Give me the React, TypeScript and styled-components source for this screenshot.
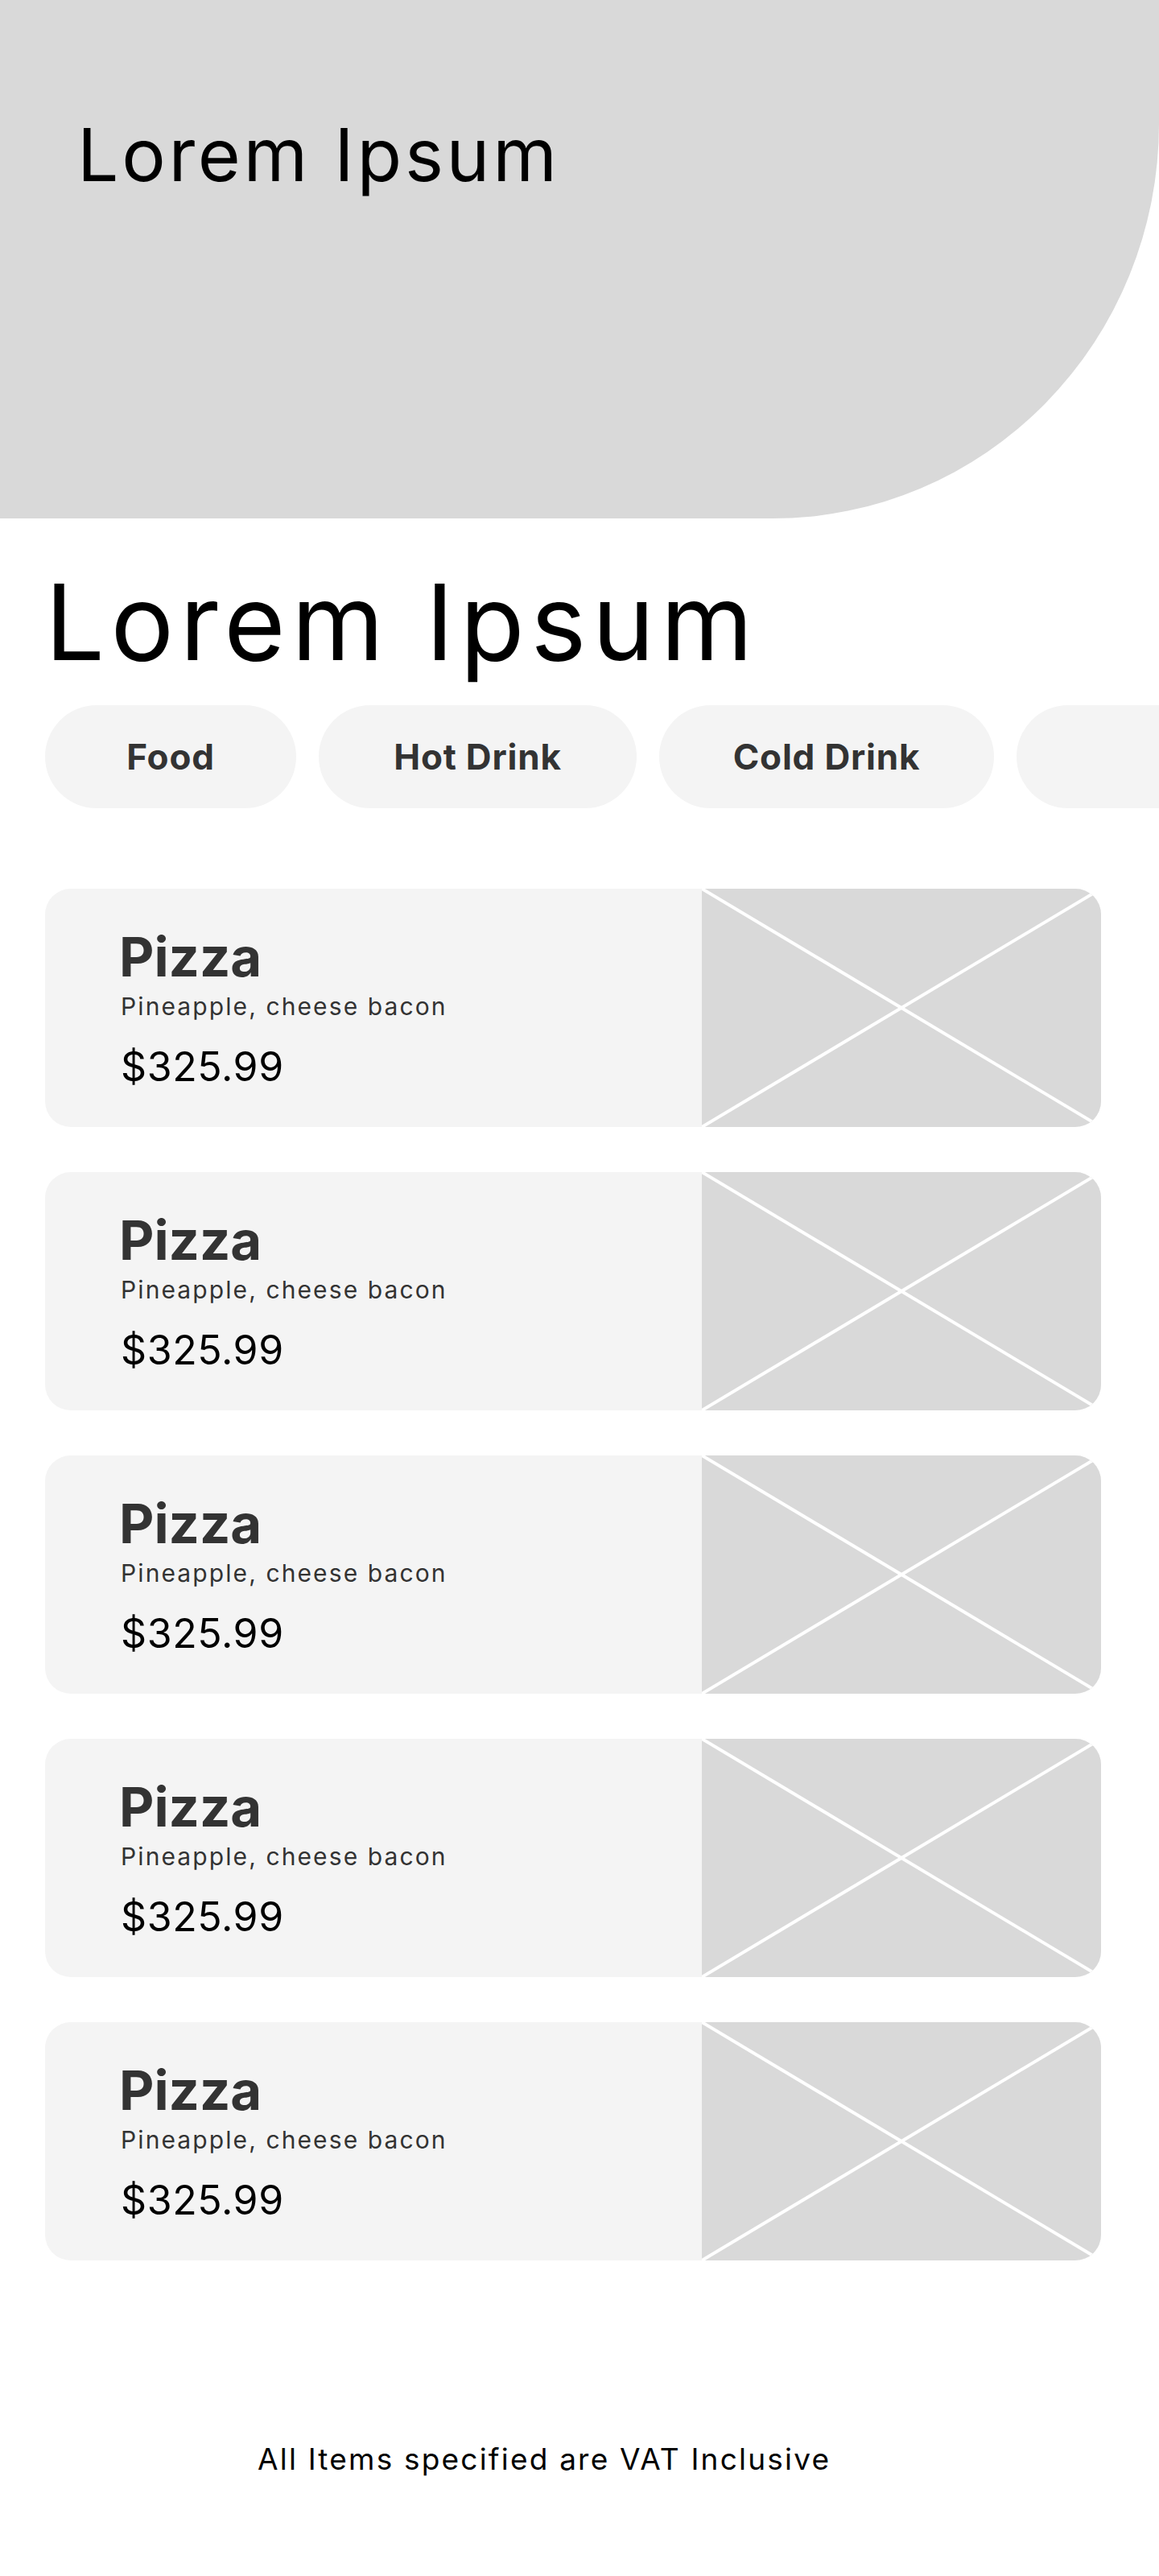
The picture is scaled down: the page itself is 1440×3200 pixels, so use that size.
import React from "react";
import styled, { createGlobalStyle } from "styled-components";

const GlobalStyle = createGlobalStyle`
  html, body {
    margin: 0;
    padding: 0;
    background: #ffffff;
  }
  body {
    font-family: Inter, "Open Sans", "Noto Sans", sans-serif;
    color: #000;
  }
  * { box-sizing: border-box; }
`;

const Page = styled.div`
  width: 1440px;
  min-height: 3200px;
  overflow: hidden;
  display: flex;
  flex-direction: column;
`;

const Hero = styled.header`
  height: 644px;
  background: #d9d9d9;
  border-bottom-right-radius: 480px 490px;
  padding: 147px 0 0 96px;
`;

const HeroTitle = styled.h1`
  margin: 0;
  font-size: 91px;
  line-height: 91px;
  font-weight: 400;
  letter-spacing: 3.7px;
  color: #000;
`;

const PageTitle = styled.h2`
  margin: 63px 0 0 56px;
  font-size: 131px;
  line-height: 131px;
  font-weight: 400;
  letter-spacing: 7.5px;
  color: #000;
`;

const ChipRow = styled.nav`
  margin-top: 38px;
  padding-left: 56px;
  display: flex;
  gap: 28px;
  overflow: hidden;
`;

const Chip = styled.button<{ $w: number }>`
  flex: 0 0 ${(p) => p.$w}px;
  height: 128px;
  border: none;
  border-radius: 64px;
  background: #f4f4f4;
  color: #333333;
  font-family: Inter, "Open Sans", sans-serif;
  font-weight: 700;
  font-size: 44px;
  letter-spacing: 0.8px;
  display: flex;
  align-items: center;
  justify-content: center;
  padding: 0;
  white-space: nowrap;
`;

const CardList = styled.section`
  margin-top: 100px;
  padding-left: 56px;
  display: flex;
  flex-direction: column;
  gap: 56px;
`;

const Card = styled.article`
  width: 1312px;
  height: 296px;
  border-radius: 32px;
  overflow: hidden;
  background: #f4f4f4;
  display: flex;
`;

const CardBody = styled.div`
  flex: 1;
  padding: 51px 0 0 92px;
  display: flex;
  flex-direction: column;
`;

const ItemName = styled.h3`
  margin: 0;
  font-size: 67px;
  line-height: 67px;
  font-weight: 700;
  color: #333333;
`;

const ItemDesc = styled.p`
  margin: 13px 0 0 2px;
  font-size: 30px;
  line-height: 30px;
  font-weight: 400;
  letter-spacing: 2.1px;
  color: #333333;
`;

const ItemPrice = styled.p`
  margin: 35px 0 0 2px;
  font-size: 50px;
  line-height: 50px;
  font-weight: 400;
  letter-spacing: 0.6px;
  color: #000;
`;

const ImageBox = styled.div`
  flex: 0 0 496px;
  height: 100%;
  background: #d9d9d9;

  svg {
    display: block;
    width: 100%;
    height: 100%;
  }
`;

const Footer = styled.footer`
  margin-top: 228px;
  padding-left: 320px;
  font-size: 37px;
  line-height: 37px;
  letter-spacing: 2.2px;
  color: #000;
`;

const Placeholder = () => (
  <ImageBox>
    <svg viewBox="0 0 100 100" preserveAspectRatio="none">
      <line x1="0" y1="0" x2="100" y2="100" stroke="#ffffff" strokeWidth="4" vectorEffect="non-scaling-stroke" />
      <line x1="100" y1="0" x2="0" y2="100" stroke="#ffffff" strokeWidth="4" vectorEffect="non-scaling-stroke" />
    </svg>
  </ImageBox>
);

const categories = [
  { label: "Food", w: 312 },
  { label: "Hot Drink", w: 395 },
  { label: "Cold Drink", w: 416 },
  { label: "", w: 312 },
];

const items = Array.from({ length: 5 }, (_, i) => ({
  id: i,
  name: "Pizza",
  desc: "Pineapple, cheese bacon",
  price: "$325.99",
}));

export default function App() {
  return (
    <>
      <GlobalStyle />
      <Page>
        <Hero>
          <HeroTitle>Lorem Ipsum</HeroTitle>
        </Hero>
        <PageTitle>Lorem Ipsum</PageTitle>
        <ChipRow>
          {categories.map((c, i) => (
            <Chip key={i} $w={c.w}>
              {c.label}
            </Chip>
          ))}
        </ChipRow>
        <CardList>
          {items.map((it) => (
            <Card key={it.id}>
              <CardBody>
                <ItemName>{it.name}</ItemName>
                <ItemDesc>{it.desc}</ItemDesc>
                <ItemPrice>{it.price}</ItemPrice>
              </CardBody>
              <Placeholder />
            </Card>
          ))}
        </CardList>
        <Footer>All Items specified are VAT Inclusive</Footer>
      </Page>
    </>
  );
}
